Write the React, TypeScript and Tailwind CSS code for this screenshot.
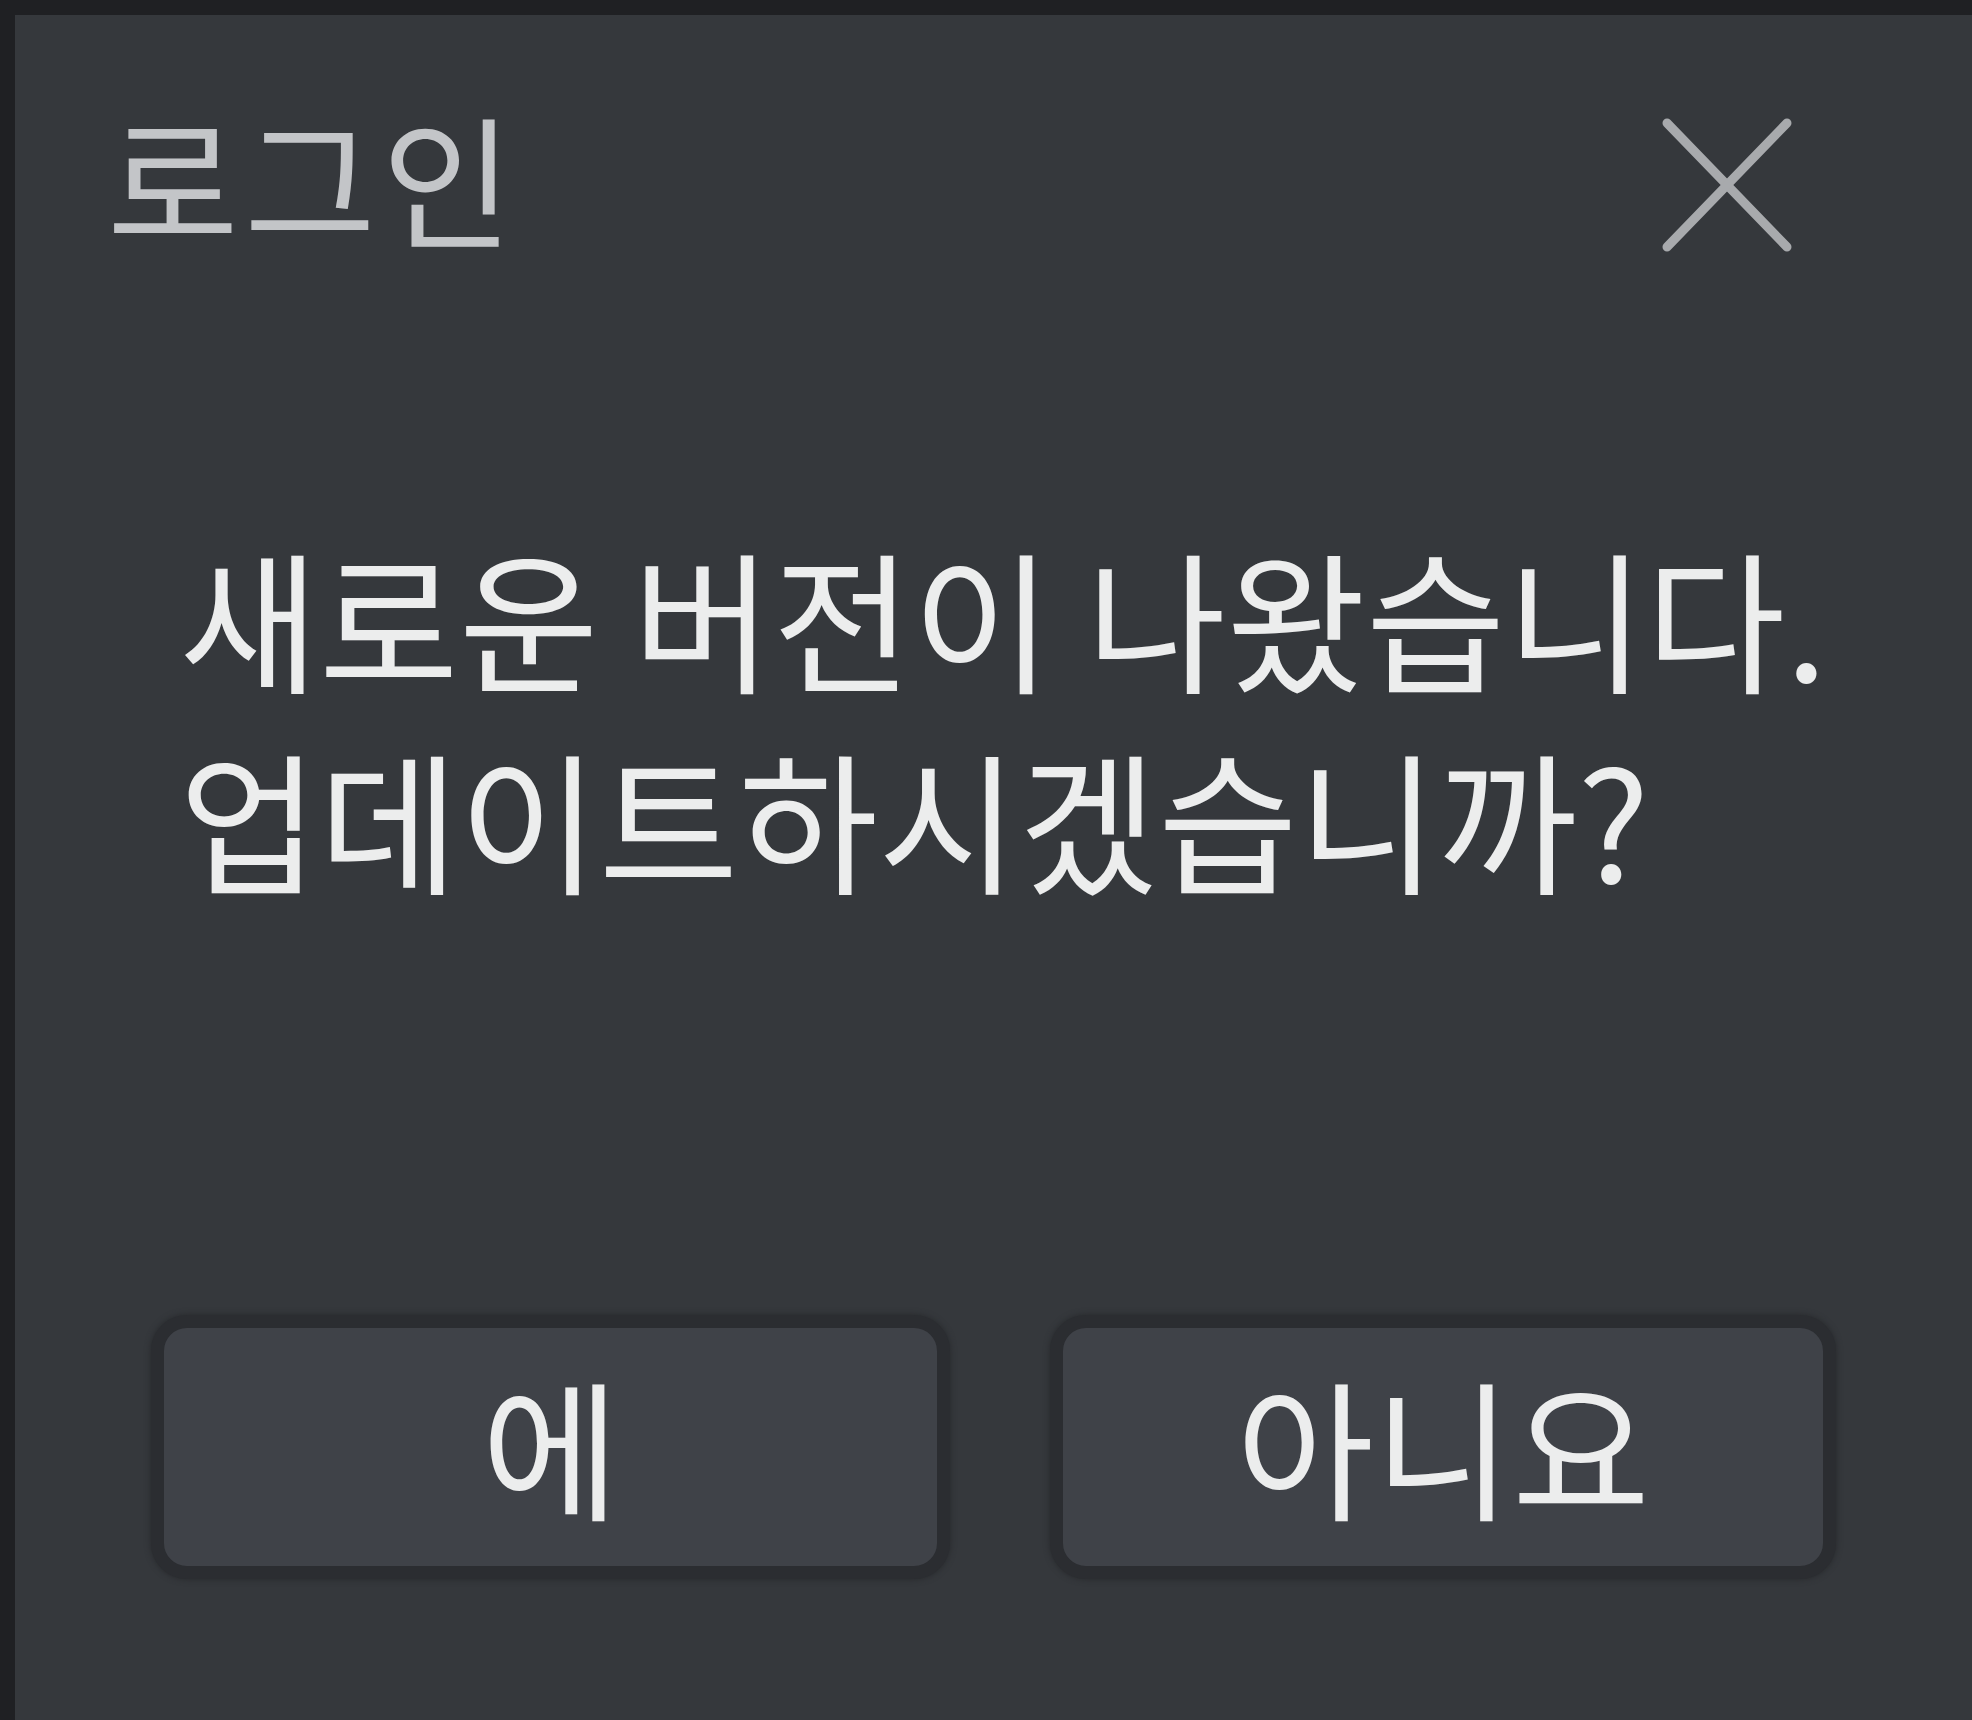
import React from "react";

function CloseIcon() {
  return (
    <svg width="132" height="136" viewBox="0 0 132 136" fill="none">
      <line x1="6" y1="6" x2="126" y2="130" stroke="#a8aaad" strokeWidth="9" strokeLinecap="round" />
      <line x1="126" y1="6" x2="6" y2="130" stroke="#a8aaad" strokeWidth="9" strokeLinecap="round" />
    </svg>
  );
}

export default function App() {
  const font = { fontFamily: '"Noto Sans CJK KR", "Noto Sans", sans-serif' };

  return (
    <div className="w-[1972px] h-[1720px] bg-[#1f2023] pt-[15px] pl-[15px] overflow-hidden" style={font}>
      <div className="h-full bg-[#35383c] flex flex-col">
        <div className="flex items-start justify-between mt-[89px] pl-[92px] pr-[179px]">
          <span className="text-[143px] leading-none tracking-[0.04em] text-[#c3c5c8]">로그인</span>
          <div className="mt-[13px]">
            <CloseIcon />
          </div>
        </div>

        <div className="mt-[263px] pl-[164px] text-[152px] leading-[201px] text-[#eceded]">
          <div>새로운 버전이 나왔습니다.</div>
          <div>업데이트하시겠습니까?</div>
        </div>

        <div className="flex gap-[100px] mt-[397px] pl-[136px]">
          <button className="w-[799px] h-[264px] pb-[6px] rounded-[36px] border-[13px] border-[#2b2d31] bg-[#3f4248] shadow-[0_0_6px_#26282b] text-[150px] leading-none text-[#eceded]">
            에
          </button>
          <button className="w-[786px] h-[264px] pb-[6px] rounded-[36px] border-[13px] border-[#2b2d31] bg-[#3f4248] shadow-[0_0_6px_#26282b] text-[150px] leading-none text-[#eceded]">
            아니요
          </button>
        </div>
      </div>
    </div>
  );
}
